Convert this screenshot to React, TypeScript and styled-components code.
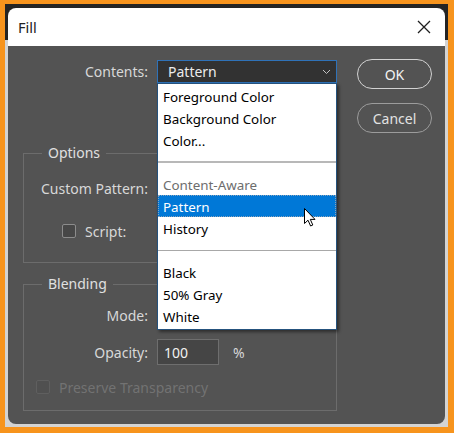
import styled, { createGlobalStyle } from "styled-components";

const GlobalStyle = createGlobalStyle`
  html, body {
    margin: 0;
    padding: 0;
  }
  body {
    font-family: "Noto Sans", "Open Sans", sans-serif;
    font-size: 14px;
  }
`;

const Screen = styled.div`
  width: 454px;
  height: 433px;
  box-sizing: border-box;
  background: #f7941d;
  padding: 4px 6px 6px 5px;
`;

const Frame = styled.div`
  height: 100%;
  box-sizing: border-box;
  background: linear-gradient(#242424 0 36px, #d3d3d3 36px);
  padding: 4px 3px 3px 3px;
`;

const Window = styled.div`
  height: 100%;
  display: flex;
  flex-direction: column;
  border-radius: 8px;
  overflow: hidden;
`;

const TitleBar = styled.div`
  height: 38px;
  flex: none;
  background: #fff;
  display: flex;
  align-items: center;
  justify-content: space-between;
  padding: 0 14px 0 10px;
  color: #222;
  font-size: 14.5px;
`;

const Body = styled.div`
  flex: 1;
  background: #535353;
  display: grid;
  grid-template-columns: 314px 75px;
  column-gap: 20px;
  align-items: start;
  padding: 14px 13px 0 15px;
`;

const Form = styled.div`
  display: flex;
  flex-direction: column;
`;

const Row = styled.div<{ $h?: number; $mt?: number }>`
  display: grid;
  grid-template-columns: 124px auto;
  column-gap: 9px;
  align-items: center;
  height: ${(p) => p.$h ?? 24}px;
  margin-top: ${(p) => p.$mt ?? 0}px;
`;

const TopRow = styled(Row)`
  grid-template-columns: 125px 180px;
`;

const Label = styled.span`
  color: #d8d8d8;
  text-align: right;
  white-space: nowrap;
`;

const SelectWrap = styled.div`
  position: relative;
  width: 180px;
  height: 23px;
`;

const Select = styled.div<{ $focus?: boolean }>`
  box-sizing: border-box;
  width: 180px;
  height: 23px;
  display: flex;
  align-items: center;
  justify-content: space-between;
  padding: 0 5px 0 10px;
  background: #323232;
  border: 1px solid ${(p) => (p.$focus ? "#2f72b8" : "#6a6a6a")};
  color: #ececec;
`;

const List = styled.div`
  position: absolute;
  top: 23px;
  left: 0;
  width: 180px;
  box-sizing: border-box;
  background: #fff;
  border: 1px solid #25527d;
  box-shadow: 2px 2px 3px rgba(0, 0, 0, 0.45);
  padding: 1px 0 2px;
  z-index: 10;
`;

const Item = styled.div<{ $disabled?: boolean; $active?: boolean }>`
  height: 22px;
  box-sizing: border-box;
  display: flex;
  align-items: center;
  padding: 1px 0 0 5px;
  font-size: 13.4px;
  color: ${(p) => (p.$disabled ? "#6d6d6d" : p.$active ? "#fff" : "#000")};
  background: ${(p) => (p.$active ? "#0078d7" : "transparent")};
  outline: ${(p) => (p.$active ? "1px dotted #8aa4bb" : "none")};
  outline-offset: -1px;
`;

const Separator = styled.div<{ $thick?: boolean }>`
  height: 22px;
  display: flex;
  align-items: center;
  &::after {
    content: "";
    flex: 1;
    height: ${(p) => (p.$thick ? 2 : 1)}px;
    background: ${(p) => (p.$thick ? "#b8b8b8" : "#a8a8a8")};
  }
`;

const Cursor = styled.svg`
  position: absolute;
  left: 146px;
  top: 124px;
`;

const Group = styled.fieldset<{ $mt: number; $pt: number; $pb: number }>`
  margin: ${(p) => p.$mt}px 0 0;
  padding: ${(p) => p.$pt}px 0 ${(p) => p.$pb}px 0;
  border: 1px solid #6c6c6c;
  min-width: 0;
`;

const Legend = styled.legend`
  margin-left: 18px;
  padding: 0 6px;
  line-height: 18px;
  color: #e0e0e0;
  font-size: 14px;
`;

const CheckRow = styled.div<{ $indent: number; $h?: number; $mt?: number }>`
  display: flex;
  align-items: center;
  gap: 9px;
  height: ${(p) => p.$h ?? 24}px;
  margin-top: ${(p) => p.$mt ?? 0}px;
  padding-left: ${(p) => p.$indent}px;
`;

const Check = styled.span<{ $disabled?: boolean }>`
  width: 14px;
  height: 14px;
  box-sizing: border-box;
  border-radius: 2px;
  border: 1px solid ${(p) => (p.$disabled ? "#5f5f5f" : "#8c8c8c")};
  background: ${(p) => (p.$disabled ? "#505050" : "#474747")};
`;

const CheckText = styled.span<{ $disabled?: boolean }>`
  color: ${(p) => (p.$disabled ? "#727272" : "#d8d8d8")};
`;

const Swatch = styled.div`
  width: 40px;
  height: 24px;
  background: #777;
`;

const NumberBox = styled.div`
  display: flex;
  align-items: center;
  gap: 14px;
`;

const Input = styled.div`
  width: 62px;
  height: 26px;
  box-sizing: border-box;
  border: 1px solid #6e6e6e;
  background: #454545;
  color: #f2f2f2;
  display: flex;
  align-items: center;
  padding-left: 6px;
`;

const Unit = styled.span`
  color: #d8d8d8;
`;

const Buttons = styled.div`
  display: flex;
  flex-direction: column;
  gap: 14px;
  margin-top: -1px;
`;

const Button = styled.div<{ $primary?: boolean }>`
  height: 30px;
  box-sizing: border-box;
  border-radius: 15px;
  border: ${(p) => (p.$primary ? "1.5px solid #d2d2d2" : "1px solid #9c9c9c")};
  color: ${(p) => (p.$primary ? "#f4f4f4" : "#e2e2e2")};
  display: flex;
  align-items: center;
  justify-content: center;
  font-size: 14px;
`;

const Chevron = () => (
  <svg width="9" height="6" viewBox="0 0 9 6">
    <path d="M1 1 L4.5 4.5 L8 1" fill="none" stroke="#c4c4c4" strokeWidth="1" />
  </svg>
);

const CloseIcon = () => (
  <svg width="14" height="14" viewBox="0 0 14 14">
    <path d="M1 1 L13 13 M13 1 L1 13" stroke="#1f1f1f" strokeWidth="1.3" />
  </svg>
);

type Entry = { label?: string; sep?: "thick" | "thin"; disabled?: boolean; active?: boolean };

const entries: Entry[] = [
  { label: "Foreground Color" },
  { label: "Background Color" },
  { label: "Color..." },
  { sep: "thick" },
  { label: "Content-Aware", disabled: true },
  { label: "Pattern", active: true },
  { label: "History" },
  { sep: "thin" },
  { label: "Black" },
  { label: "50% Gray" },
  { label: "White" },
];

export default function App() {
  return (
    <>
      <GlobalStyle />
      <Screen>
        <Frame>
          <Window>
            <TitleBar>
              <span>Fill</span>
              <CloseIcon />
            </TitleBar>
            <Body>
              <Form>
                <TopRow $h={23}>
                  <Label>Contents:</Label>
                  <SelectWrap>
                    <Select $focus>
                      <span>Pattern</span>
                      <Chevron />
                    </Select>
                    <List>
                      {entries.map((e, i) =>
                        e.sep ? (
                          <Separator key={i} $thick={e.sep === "thick"} />
                        ) : (
                          <Item key={i} $disabled={e.disabled} $active={e.active}>
                            {e.label}
                          </Item>
                        )
                      )}
                      <Cursor width="12" height="19" viewBox="0 0 12 19">
                        <path
                          d="M0.5 0.5 L0.5 15.5 L4 12.2 L6.6 18 L8.8 17 L6.3 11.4 L11 11.4 Z"
                          fill="#fff"
                          stroke="#000"
                          strokeWidth="1"
                          strokeLinejoin="round"
                        />
                      </Cursor>
                    </List>
                  </SelectWrap>
                </TopRow>

                <Group $mt={61} $pt={14} $pb={19}>
                  <Legend>Options</Legend>
                  <Row>
                    <Label>Custom Pattern:</Label>
                    <Swatch />
                  </Row>
                  <CheckRow $indent={38} $mt={19}>
                    <Check />
                    <CheckText>Script:</CheckText>
                  </CheckRow>
                </Group>

                <Group $mt={12} $pt={10} $pb={13}>
                  <Legend>Blending</Legend>
                  <Row>
                    <Label>Mode:</Label>
                    <Select />
                  </Row>
                  <Row $h={26} $mt={12}>
                    <Label>Opacity:</Label>
                    <NumberBox>
                      <Input>100</Input>
                      <Unit>%</Unit>
                    </NumberBox>
                  </Row>
                  <CheckRow $indent={12} $h={20} $mt={12}>
                    <Check $disabled />
                    <CheckText $disabled>Preserve Transparency</CheckText>
                  </CheckRow>
                </Group>
              </Form>

              <Buttons>
                <Button $primary>OK</Button>
                <Button>Cancel</Button>
              </Buttons>
            </Body>
          </Window>
        </Frame>
      </Screen>
    </>
  );
}
